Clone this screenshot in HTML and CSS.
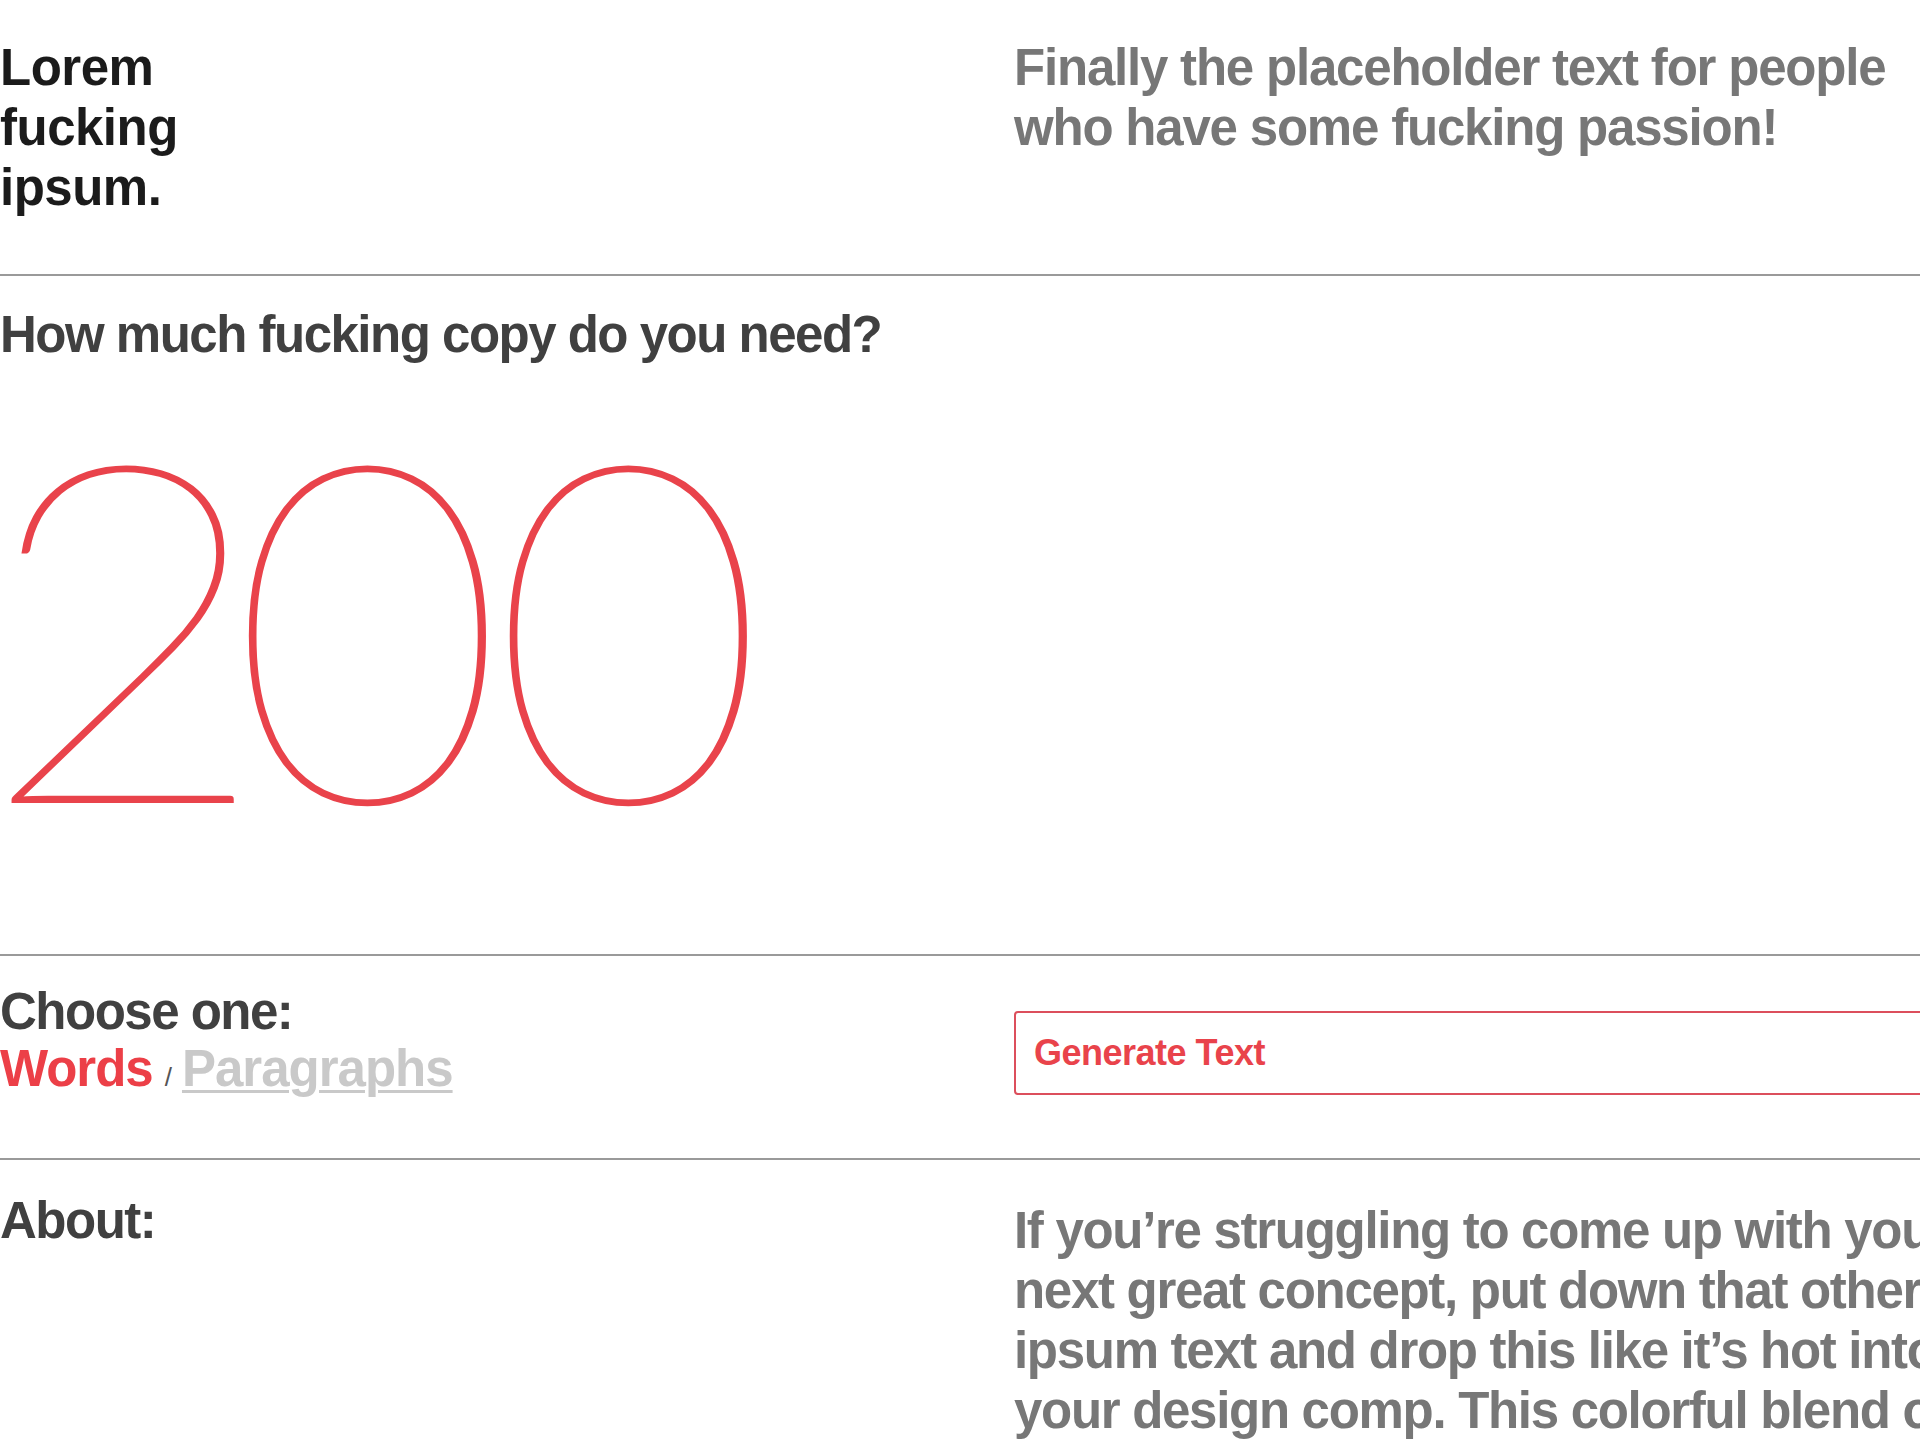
FILE: index.html
```html
<!DOCTYPE html>
<html lang="en">
<head>
<meta charset="utf-8">
<title>Lorem fucking ipsum.</title>
<link rel="stylesheet" href="styles.css">
</head>
<body>
<main class="page">
  <section class="row intro">
    <h1 class="title">Lorem fucking ipsum.</h1>
    <p class="tagline">Finally the placeholder text for people who have some fucking passion!</p>
  </section>
  <hr class="rule">
  <section class="count">
    <h2 class="label">How much fucking copy do you need?</h2>
    <div class="number"><span class="digit-first">2</span>00</div>
  </section>
  <hr class="rule">
  <section class="row choose">
    <div class="choose-left">
      <h2 class="label">Choose one:</h2>
      <div class="options"><span class="opt opt-active">Words</span><span class="sep">/</span><a class="opt opt-link" href="#">Paragraphs</a></div>
    </div>
    <div class="choose-right">
      <button class="generate" type="button">Generate Text</button>
    </div>
  </section>
  <hr class="rule">
  <section class="row about">
    <h2 class="label">About:</h2>
    <p class="body-text">If you’re struggling to come up with your next great concept, put down that other ipsum text and drop this like it’s hot into your design comp. This colorful blend of words and phrases will light a fire under your ass and get you moving in the right fucking direction.</p>
  </section>
</main>
</body>
</html>
```
FILE: styles.css
```css
html, body {
  margin: 0;
  padding: 0;
  background: #ffffff;
  overflow: hidden;
}

body {
  font-family: "Liberation Sans", Arial, Helvetica, sans-serif;
  font-weight: 700;
  width: 1920px;
}

.page {
  padding-top: 38px;
}

.row {
  display: grid;
  grid-template-columns: 1014px 980px;
}

h1, h2, p {
  margin: 0;
}

.title {
  font-size: 51px;
  line-height: 60px;
  font-weight: 700;
  color: #1b1b1b;
  letter-spacing: -0.5px;
  width: min-content;
}

.tagline {
  font-size: 51px;
  line-height: 60px;
  color: #777777;
  letter-spacing: -1.2px;
}

.intro {
  padding-bottom: 56px;
}

.rule {
  margin: 0;
  border: 0;
  height: 2px;
  background: #9a9a9a;
}

.label {
  font-size: 51px;
  line-height: 60px;
  font-weight: 700;
  color: #404040;
  letter-spacing: -1.5px;
}

.count {
  padding-top: 29px;
  padding-bottom: 98px;
}

.number {
  margin-top: 17px;
  margin-left: -21px;
  height: 474px;
  font-family: Lato, "Liberation Sans", sans-serif;
  font-weight: 100;
  font-size: 474px;
  line-height: 474px;
  color: #e9434b;
  -webkit-text-stroke: 2px #e9434b;
  letter-spacing: -14px;
}

.digit-first {
  display: inline-block;
  margin-right: -10px;
  transform: scaleX(1.06);
  transform-origin: left center;
}

.choose {
  padding-top: 27px;
  padding-bottom: 52px;
}

.choose .label {
  line-height: 57px;
}

.options {
  font-size: 51px;
  line-height: 57px;
  letter-spacing: -1px;
}

.opt-active {
  color: #ec3f47;
}

.sep {
  font-size: 26px;
  font-weight: 400;
  color: #555555;
  margin: 0 10px 0 12px;
  letter-spacing: 0;
}

.opt-link {
  color: #c9c9c9;
  text-decoration: underline;
  text-decoration-thickness: 3px;
  text-underline-offset: 4px;
}

.choose-right {
  padding-top: 28px;
}

.generate {
  display: block;
  width: 100%;
  box-sizing: border-box;
  height: 84px;
  padding: 0 18px;
  border: 2px solid #dc4f5c;
  border-radius: 4px;
  background: #ffffff;
  text-align: left;
  font-family: "Liberation Sans", Arial, Helvetica, sans-serif;
  font-weight: 700;
  font-size: 36px;
  letter-spacing: -0.5px;
  color: #e9434b;
}

.about {
  padding-top: 31px;
}

.body-text {
  margin-top: 10px;
  font-size: 51px;
  line-height: 60px;
  color: #777777;
  letter-spacing: -1.3px;
}
```
